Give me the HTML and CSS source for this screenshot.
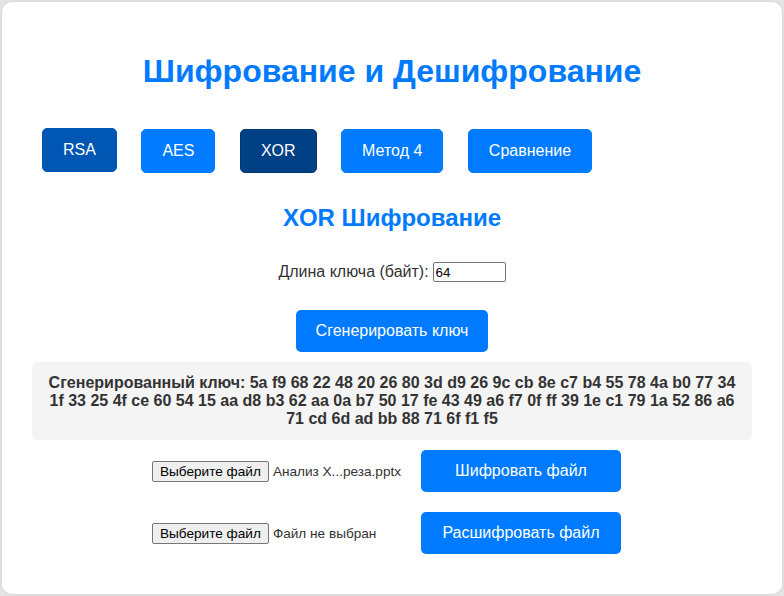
FILE: index.html
```html
<!DOCTYPE html>
<html lang="ru">
<head>
<meta charset="utf-8">
<title>Шифрование и Дешифрование</title>
<link rel="stylesheet" href="styles.css">
</head>
<body>
<div class="card">
  <h1 class="title">Шифрование и Дешифрование</h1>
  <div class="tabs">
    <button class="tab tab-hover">RSA</button>
    <button class="tab">AES</button>
    <button class="tab tab-active">XOR</button>
    <button class="tab">Метод 4</button>
    <button class="tab">Сравнение</button>
  </div>
  <h2 class="subtitle">XOR Шифрование</h2>
  <div class="key-row">
    <label class="key-label">Длина ключа (байт):</label>
    <input class="key-input" type="text" value="64">
  </div>
  <div class="gen-row">
    <button class="btn">Сгенерировать ключ</button>
  </div>
  <div class="key-box">Сгенерированный ключ: 5a f9 68 22 48 20 26 80 3d d9 26 9c cb 8e c7 b4 55 78 4a b0 77 34 1f 33 25 4f ce 60 54 15 aa d8 b3 62 aa 0a b7 50 17 fe 43 49 a6 f7 0f ff 39 1e c1 79 1a 52 86 a6 71 cd 6d ad bb 88 71 6f f1 f5</div>
  <div class="file-row">
    <div class="file-input"><span class="file-btn">Выберите файл</span><span class="file-name">Анализ X...реза.pptx</span></div>
    <button class="btn btn-file">Шифровать файл</button>
  </div>
  <div class="file-row">
    <div class="file-input"><span class="file-btn">Выберите файл</span><span class="file-name">Файл не выбран</span></div>
    <button class="btn btn-file">Расшифровать файл</button>
  </div>
</div>
</body>
</html>
```
FILE: styles.css
```css
html, body {
  margin: 0;
  padding: 0;
}
body {
  background: #e4e4e4;
  padding: 2px;
  font-family: "Liberation Sans", Arial, sans-serif;
  color: #333;
}
.card {
  box-sizing: border-box;
  height: 592px;
  background: #fff;
  border-radius: 10px;
  padding: 30px;
  box-shadow: 0 0 4px rgba(0, 0, 0, 0.08);
}
.title {
  margin: 21px 0 0;
  text-align: center;
  color: #007bff;
  font-size: 32px;
  line-height: 37px;
  font-weight: bold;
}
.tabs {
  display: flex;
  margin-top: 39px;
  padding-left: 10px;
}
.tab {
  font-family: "Liberation Sans", Arial, sans-serif;
  font-size: 16px;
  line-height: 18px;
  color: #fff;
  background: #007bff;
  border: 1px solid #007bff;
  border-radius: 5px;
  padding: 12px 20px;
  margin-right: 24.5px;
  cursor: pointer;
}
.tab-hover {
  background: #0056b3;
  border-color: #0056b3;
  transform: translateY(-1px);
}
.tab-active {
  background: #004085;
  border-color: #003570;
}
.subtitle {
  margin: 31px 0 0;
  text-align: center;
  color: #007bff;
  font-size: 24px;
  line-height: 28px;
  font-weight: bold;
}
.key-row {
  display: flex;
  justify-content: center;
  align-items: center;
  margin-top: 30px;
  font-size: 16px;
}
.key-label {
  margin-right: 4px;
}
.key-input {
  box-sizing: border-box;
  width: 73px;
  height: 20px;
  border: 1px solid #767676;
  border-radius: 2px;
  padding: 1px 2px;
  font-family: "Liberation Sans", Arial, sans-serif;
  font-size: 13.33px;
  color: #000;
}
.gen-row {
  display: flex;
  justify-content: center;
  margin-top: 28px;
}
.btn {
  font-family: "Liberation Sans", Arial, sans-serif;
  font-size: 16px;
  line-height: 18px;
  color: #fff;
  background: #007bff;
  border: 0;
  border-radius: 5px;
  padding: 12px 20px;
}
.key-box {
  margin-top: 10px;
  background: #f4f4f4;
  border-radius: 5px;
  padding: 12px 15px;
  text-align: center;
  font-weight: bold;
  font-size: 16px;
  line-height: 18px;
}
.file-row {
  display: flex;
  justify-content: center;
  align-items: center;
  margin-top: 10px;
  padding-right: 11px;
}
.file-row + .file-row {
  margin-top: 20px;
}
.file-input {
  display: flex;
  align-items: center;
  width: 253px;
  margin-right: 16px;
  font-size: 13.6px;
}
.file-btn {
  box-sizing: border-box;
  height: 21px;
  padding: 1px 7px;
  border: 1px solid #767676;
  border-radius: 2px;
  background: #efefef;
  color: #000;
  line-height: 17px;
  margin-right: 4px;
  white-space: nowrap;
}
.file-name {
  white-space: nowrap;
}
.btn-file {
  width: 200px;
  height: 42px;
}
```
